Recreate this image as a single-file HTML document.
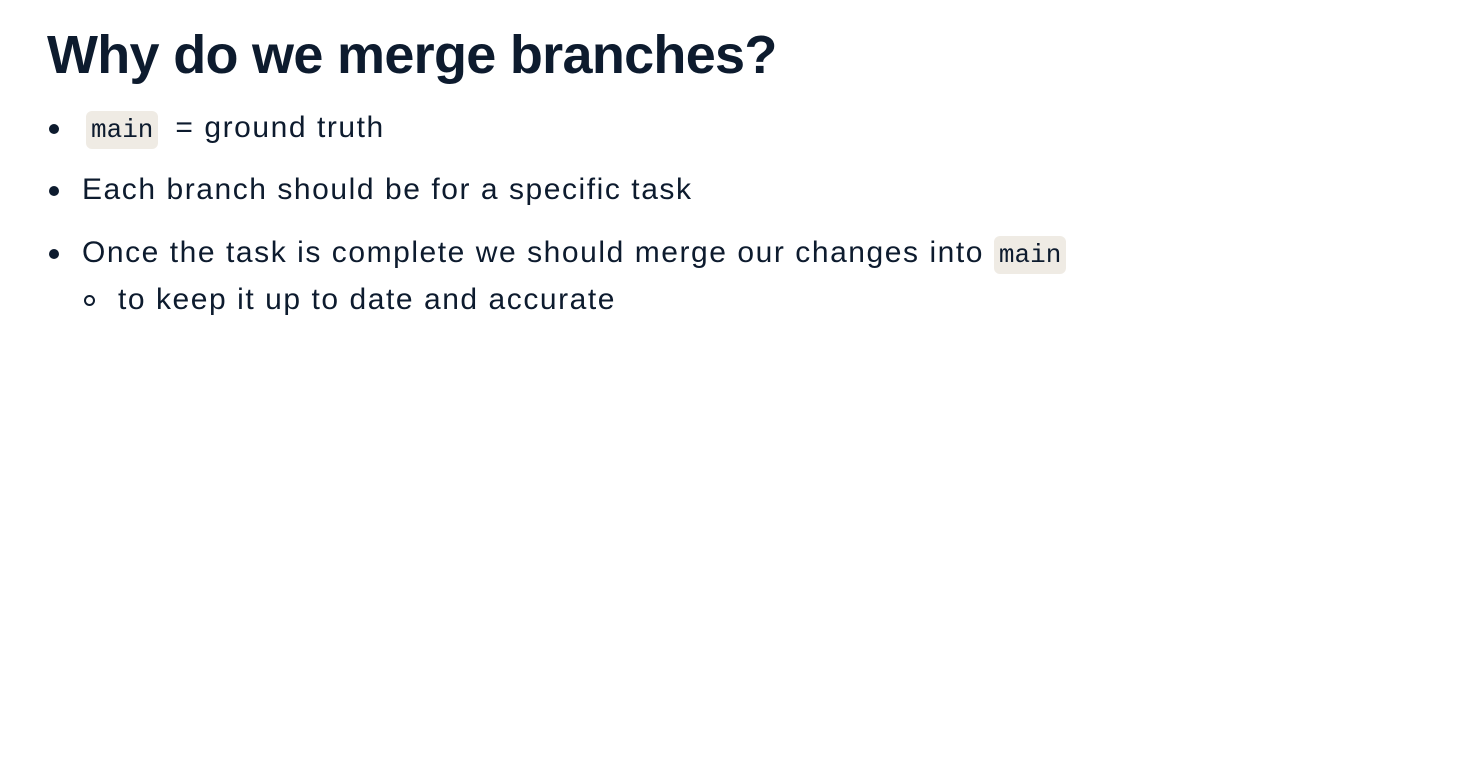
<!DOCTYPE html>
<html><head><style>
body{margin:0;width:1480px;height:760px;background:#fff;color:#0d1b2e;font-family:"Liberation Sans",sans-serif;position:relative;overflow:hidden}
h1{position:absolute;left:47px;top:24px;margin:0;font-size:54px;font-weight:bold;letter-spacing:-0.7px;white-space:nowrap}
.t{position:absolute;font-size:30px;letter-spacing:1.55px;white-space:nowrap;line-height:40px}
.dot{position:absolute;width:10px;height:10px;border-radius:50%;background:#0d1b2e}
.ring{position:absolute;width:7px;height:7px;border-radius:50%;border:2px solid #0d1b2e}
code{font-family:"Liberation Mono",monospace;font-size:26px;letter-spacing:0;background:#efebe4;border-radius:6px;padding:4px 5px;}
</style></head><body>
<h1>Why do we merge branches?</h1>
<div class="dot" style="left:49px;top:124px"></div>
<div class="t" style="left:86px;top:108px"><code>main</code><span style="margin-left:17px">= ground truth</span></div>
<div class="dot" style="left:49px;top:186px"></div>
<div class="t" style="left:82px;top:170px">Each branch should be for a specific task</div>
<div class="dot" style="left:49px;top:249px"></div>
<div class="t" style="left:82px;top:233px">Once the task is complete we should merge our changes into <code>main</code></div>
<div class="ring" style="left:84px;top:295px"></div>
<div class="t" style="left:118px;top:280px">to keep it up to date and accurate</div>
</body></html>
